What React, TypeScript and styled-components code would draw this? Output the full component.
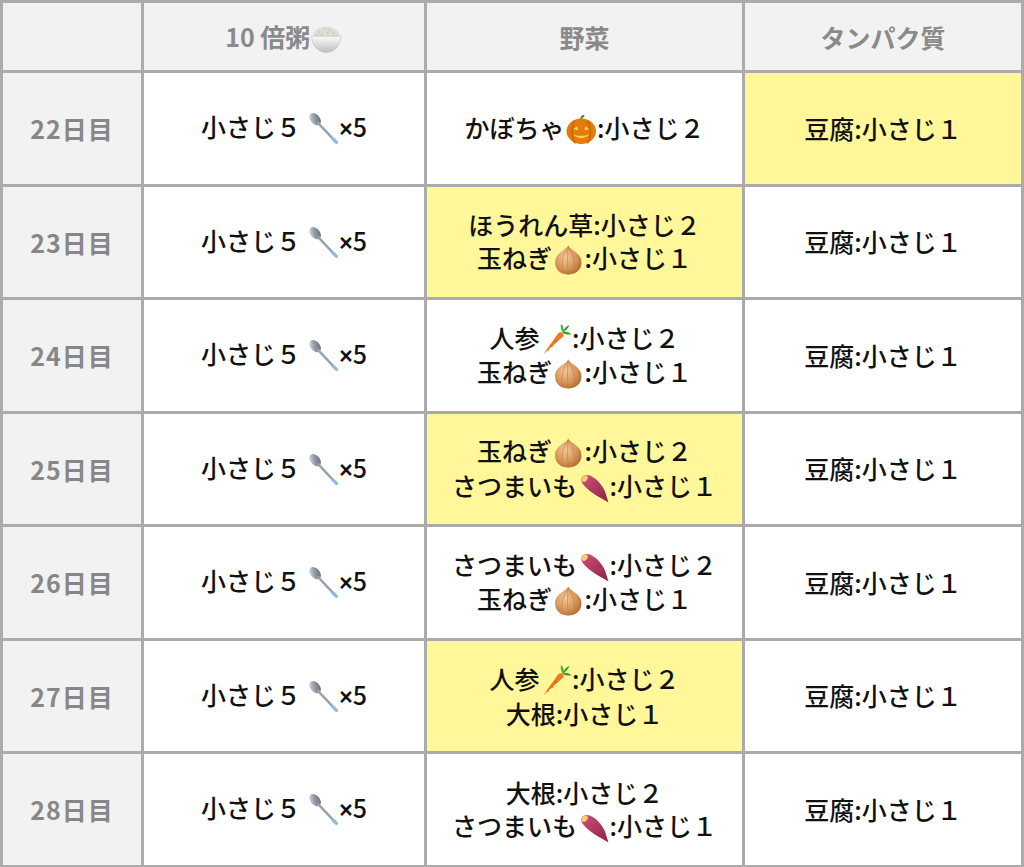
import React from "react";
import styled, { createGlobalStyle } from "styled-components";

const GlobalStyle = createGlobalStyle`
  html, body {
    margin: 0;
    padding: 0;
    background: #ffffff;
  }
  body {
    font-family: "Noto Sans CJK JP", "Noto Sans", sans-serif;
  }
`;

const Table = styled.table`
  width: 1024px;
  border-collapse: collapse;
  table-layout: fixed;
  border: 3px solid #ababab;
`;

const HeadCell = styled.th<{ $width?: number }>`
  width: ${(p) => (p.$width ? `${p.$width}px` : "auto")};
  height: 67px;
  padding: 0;
  background: #f2f2f2;
  border: 3px solid #ababab;
  color: #8a8a8a;
  font-size: 25px;
  font-weight: 700;
  text-align: center;
  vertical-align: middle;
`;

const DayCell = styled.th`
  height: 110.5px;
  padding: 0;
  background: #f2f2f2;
  border: 3px solid #ababab;
  color: #878787;
  font-size: 25px;
  font-weight: 700;
  letter-spacing: 1px;
  text-align: center;
  vertical-align: middle;
`;

const Cell = styled.td<{ $mark?: boolean }>`
  padding: 0;
  background: ${(p) => (p.$mark ? "#fff799" : "#ffffff")};
  border: 3px solid #ababab;
  color: #111111;
  font-size: 25px;
  font-weight: 500;
  line-height: 33px;
  text-align: center;
  vertical-align: middle;
`;

const Line = styled.div`
  white-space: nowrap;
`;

const Times = styled.span`
  font-family: "Liberation Sans", sans-serif;
  font-weight: 700;
  font-size: 0.92em;
`;

const Emoji = styled.svg`
  display: inline-block;
  width: 1.3em;
  height: 1.3em;
  vertical-align: -0.3em;
`;

type IconName = "spoon" | "rice" | "pumpkin" | "onion" | "carrot" | "potato";

function Icon({ name }: { name: IconName }) {
  switch (name) {
    case "spoon":
      return (
        <Emoji viewBox="0 0 32 32">
          <defs>
            <linearGradient id="sp" x1="0" y1="0" x2="1" y2="1">
              <stop offset="0" stopColor="#e6e9ee" />
              <stop offset="0.5" stopColor="#8f96a0" />
              <stop offset="1" stopColor="#5d6672" />
            </linearGradient>
          </defs>
          <ellipse cx="8" cy="7" rx="4.6" ry="6.8" transform="rotate(-42 8 7)" fill="url(#sp)" />
          <path d="M11 11 L27.5 28.5" stroke="#9aa2ad" strokeWidth="2.4" strokeLinecap="round" />
          <path d="M25.5 26.5 L29 30" stroke="#8fbbe6" strokeWidth="3.2" strokeLinecap="round" />
        </Emoji>
      );
    case "rice":
      return (
        <Emoji viewBox="0 0 32 32">
          <defs>
            <linearGradient id="bw" x1="0" y1="0" x2="0" y2="1">
              <stop offset="0" stopColor="#fbfbfb" />
              <stop offset="1" stopColor="#bfbfbf" />
            </linearGradient>
          </defs>
          <path d="M3 15 C3 1 29 1 29 15 Z" fill="#e0ddd6" />
          <path d="M8 10 h2 M13 7 h2 M18 8 h2 M22 11 h2 M11 12 h2 M16 11 h2 M6 13 h2 M24 14 h2" stroke="#c9c4bb" strokeWidth="1.2" />
          <path d="M1.5 14 H30.5 A14.5 16 0 0 1 1.5 14 Z" fill="url(#bw)" stroke="#bdbdbd" strokeWidth="0.6" />
        </Emoji>
      );
    case "pumpkin":
      return (
        <Emoji viewBox="0 0 32 32">
          <path d="M15 7 C15 4 16 2 19 2 L19 4 C17 4 17 6 17 7 Z" fill="#3f8a2c" />
          <ellipse cx="16" cy="18" rx="14.5" ry="12.5" fill="#e57a0e" />
          <path d="M10 7.5 C6 12 6 24 10 30 M22 7.5 C26 12 26 24 22 30" stroke="#c2600a" strokeWidth="1.2" fill="none" />
          <path d="M8 16 L12 13 L13 17 Z M24 16 L20 13 L19 17 Z" fill="#ffd43b" />
          <path d="M8 21 C11 26 21 26 24 21 C20 23 12 23 8 21 Z" fill="#ffd43b" />
        </Emoji>
      );
    case "onion":
      return (
        <Emoji viewBox="0 0 32 32">
          <defs>
            <radialGradient id="on" cx="0.4" cy="0.4" r="0.7">
              <stop offset="0" stopColor="#f2c79a" />
              <stop offset="0.6" stopColor="#d69558" />
              <stop offset="1" stopColor="#a8652c" />
            </radialGradient>
          </defs>
          <path d="M16 2 C17 7 29 9 29 19 C29 26 24 31 16 31 C8 31 3 26 3 19 C3 9 15 7 16 2 Z" fill="url(#on)" />
          <path d="M16 4 C12 10 9 15 10 30 M16 4 C20 10 23 15 22 30 M16 4 C15 12 15 20 16 31" stroke="#b8763c" strokeWidth="0.7" fill="none" opacity="0.7" />
        </Emoji>
      );
    case "carrot":
      return (
        <Emoji viewBox="0 0 32 32">
          <path d="M22 9 C24 5 26 3 29 2 C28 5 26 7 23 9 Z" fill="#3c9a2e" />
          <path d="M22 9 C20 5 20 3 21 1 C23 3 24 6 23 9 Z" fill="#4fb33a" />
          <path d="M22 9 C26 8 29 9 31 11 C28 12 25 11 23 10 Z" fill="#3c9a2e" />
          <path d="M3 31 L18 10 C20 8 24 10 23 13 Z" fill="#ef7a1d" />
          <path d="M10 22 L13 23 M14 17 L17 18 M7 26 L9 27" stroke="#c95d0c" strokeWidth="0.9" />
        </Emoji>
      );
    case "potato":
      return (
        <Emoji viewBox="0 0 32 32">
          <defs>
            <linearGradient id="po" x1="0" y1="0" x2="1" y2="1">
              <stop offset="0" stopColor="#d0507a" />
              <stop offset="1" stopColor="#8c2244" />
            </linearGradient>
          </defs>
          <path d="M5 6 C10 1 18 6 24 14 C28 19 29 25 31 31 C25 27 19 25 13 20 C7 15 2 10 5 6 Z" fill="url(#po)" />
          <ellipse cx="7.5" cy="7.5" rx="3.6" ry="2.6" transform="rotate(-45 7.5 7.5)" fill="#f3cf74" />
        </Emoji>
      );
  }
}

// "{name}" in a text line becomes a drawn emoji, "×" gets a smaller glyph
function RichLine({ text }: { text: string }) {
  const parts = text.split(/(\{[a-z]+\}|×)/);
  return (
    <Line>
      {parts.map((part, i) => {
        if (part.startsWith("{")) return <Icon key={i} name={part.slice(1, -1) as IconName} />;
        if (part === "×") return <Times key={i}>×</Times>;
        return <React.Fragment key={i}>{part}</React.Fragment>;
      })}
    </Line>
  );
}

interface DayRow {
  day: string;
  veg: string[];
  vegMark?: boolean;
  proteinMark?: boolean;
}

const rows: DayRow[] = [
  { day: "22日目", veg: ["かぼちゃ{pumpkin}:小さじ２"], proteinMark: true },
  { day: "23日目", veg: ["ほうれん草:小さじ２", "玉ねぎ{onion}:小さじ１"], vegMark: true },
  { day: "24日目", veg: ["人参{carrot}:小さじ２", "玉ねぎ{onion}:小さじ１"] },
  { day: "25日目", veg: ["玉ねぎ{onion}:小さじ２", "さつまいも{potato}:小さじ１"], vegMark: true },
  { day: "26日目", veg: ["さつまいも{potato}:小さじ２", "玉ねぎ{onion}:小さじ１"] },
  { day: "27日目", veg: ["人参{carrot}:小さじ２", "大根:小さじ１"], vegMark: true },
  { day: "28日目", veg: ["大根:小さじ２", "さつまいも{potato}:小さじ１"] },
];

export default function App() {
  return (
    <>
      <GlobalStyle />
      <Table>
        <thead>
          <tr>
            <HeadCell $width={138}></HeadCell>
            <HeadCell $width={280}>
              <RichLine text="10 倍粥{rice}" />
            </HeadCell>
            <HeadCell $width={315}>野菜</HeadCell>
            <HeadCell>タンパク質</HeadCell>
          </tr>
        </thead>
        <tbody>
          {rows.map((r) => (
            <tr key={r.day}>
              <DayCell>{r.day}</DayCell>
              <Cell>
                <RichLine text="小さじ５ {spoon}×5" />
              </Cell>
              <Cell $mark={r.vegMark}>
                {r.veg.map((v) => (
                  <RichLine key={v} text={v} />
                ))}
              </Cell>
              <Cell $mark={r.proteinMark}>豆腐:小さじ１</Cell>
            </tr>
          ))}
        </tbody>
      </Table>
    </>
  );
}
